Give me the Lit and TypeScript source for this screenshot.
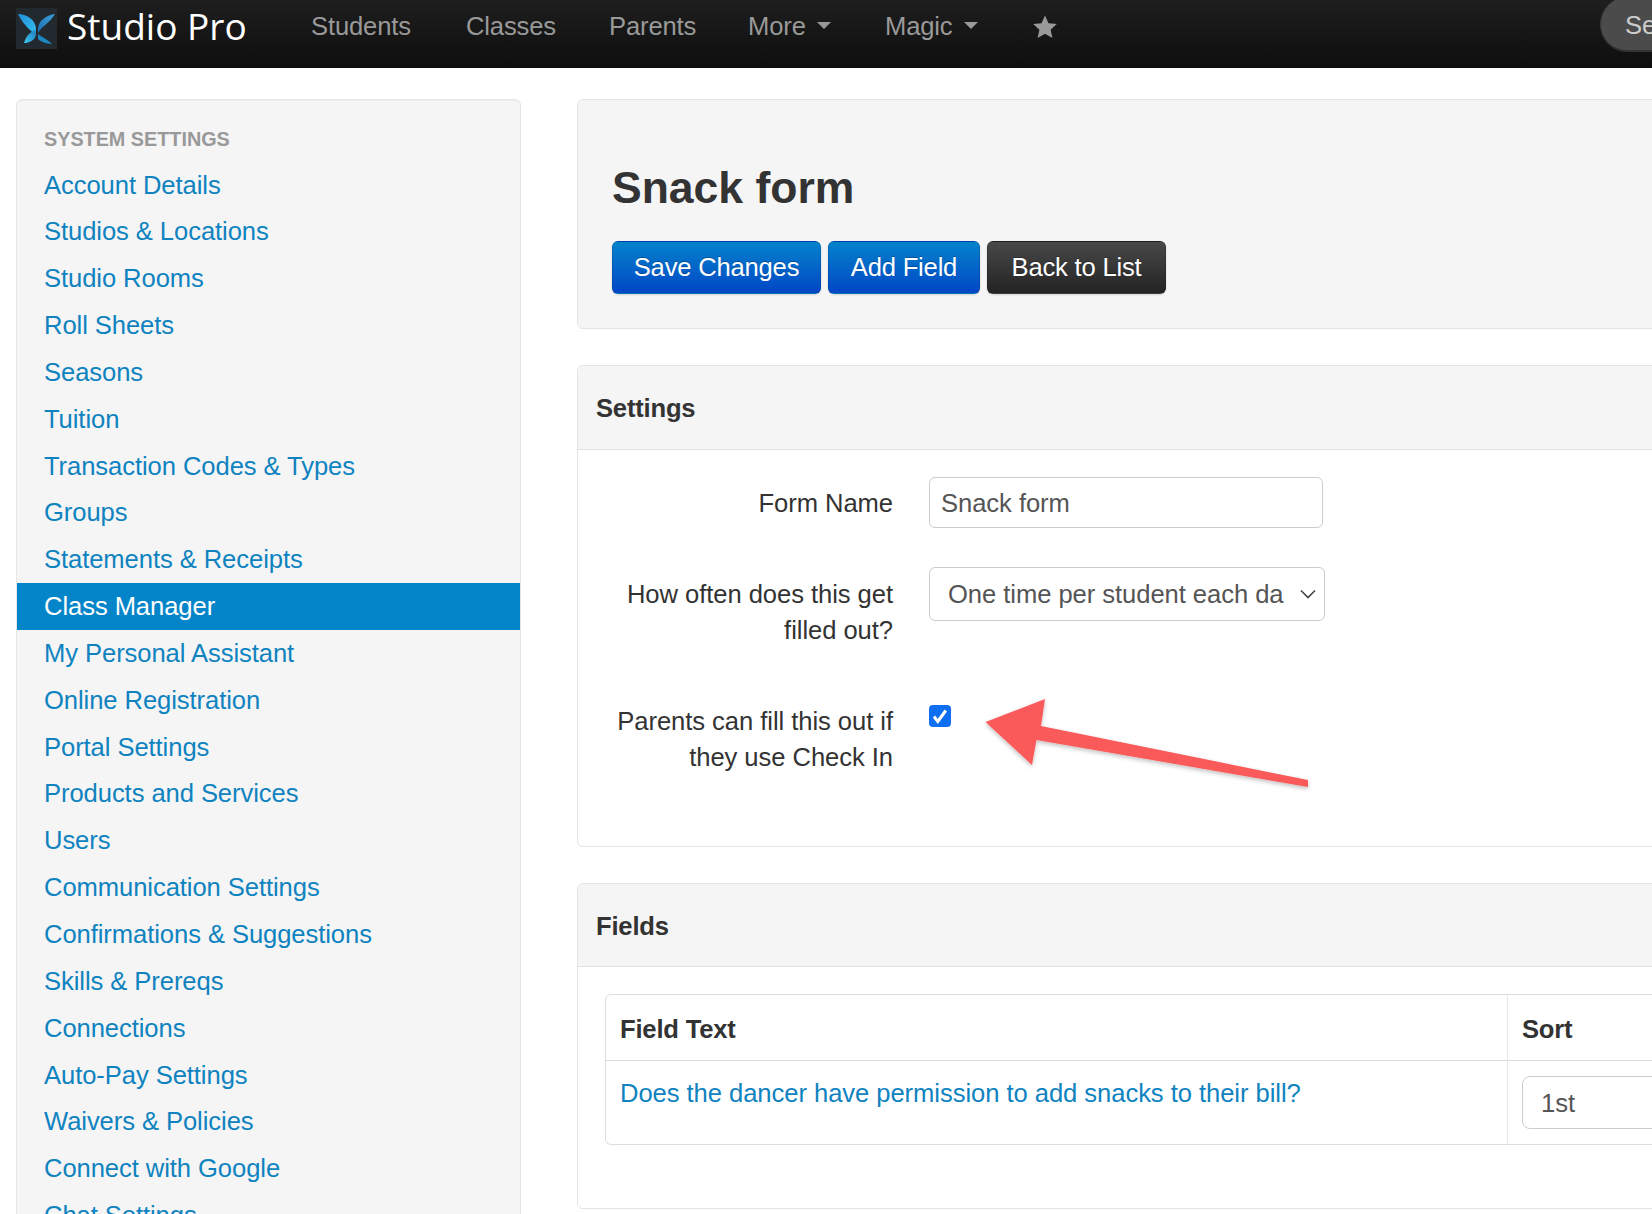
import { LitElement, html, css, svg } from "lit";
import { customElement } from "lit/decorators.js";

const ITEMS = [
  "Account Details", "Studios & Locations", "Studio Rooms", "Roll Sheets", "Seasons", "Tuition",
  "Transaction Codes & Types", "Groups", "Statements & Receipts", "Class Manager", "My Personal Assistant",
  "Online Registration", "Portal Settings", "Products and Services", "Users", "Communication Settings",
  "Confirmations & Suggestions", "Skills & Prereqs", "Connections", "Auto-Pay Settings", "Waivers & Policies",
  "Connect with Google", "Chat Settings",
];

@customElement("app-root")
export class AppRoot extends LitElement {
  static styles = css`
    :host {
      display: block;
      width: 1652px;
      height: 1214px;
      overflow: hidden;
      background: #fff;
      font-family: "Liberation Sans", Arial, sans-serif;
      font-size: 25.6px;
      letter-spacing: -0.06px;
      color: #333;
    }
    a { color: #0f83c0; text-decoration: none; }
    .nav {
      height: 68px;
      background: linear-gradient(#1e1e1e, #0e0e0e);
      display: flex;
      align-items: center;
      position: relative;
      overflow: hidden;
    }
    .logo { width: 41px; height: 41px; margin-left: 16px; margin-top: -12px; flex: none; display: block; }
    .brand { font-family: "Open Sans", sans-serif; font-size: 37px; letter-spacing: 0; color: #fff; margin-left: 10px; margin-top: -17px; width: 244px; flex: none; }
    .nav-item { color: #999; margin-top: -15px; display: flex; align-items: center; flex: none; letter-spacing: -0.15px; }
    .students { width: 155px; }
    .classes { width: 143px; }
    .parents { width: 139px; }
    .more { width: 137px; }
    .magic { width: 148px; }
    .caret { width: 0; height: 0; border-left: 7px solid transparent; border-right: 7px solid transparent; border-top: 7px solid #999; margin-left: 11px; margin-top: -2px; }
    .star { width: 24px; height: 24px; display: block; flex: none; margin-top: -15px; }
    .pill {
      position: absolute; left: 1600px; top: -3px; width: 200px; height: 53px;
      border-radius: 27px; background: #4b4b4b; border-bottom: 2px solid #333; border-left: 1px solid #333;
      color: #ccc; box-sizing: content-box; line-height: 57px; padding-left: 24px;
    }
    .page { display: flex; align-items: flex-start; padding: 31px 0 0 16px; gap: 56px; }
    .side {
      width: 505px; flex: none; box-sizing: border-box; background: #f5f5f5;
      border: 1px solid #e6e6e6; border-radius: 6px; padding: 18px 0 40px;
      box-shadow: inset 0 1px 1px rgba(0,0,0,.03);
    }
    .side h5 { margin: 0; padding-left: 27px; font-size: 19.8px; line-height: 43.5px; font-weight: 700; color: #999; text-transform: uppercase; letter-spacing: 0; }
    .side a { display: block; padding-left: 27px; line-height: 46.85px; height: 46.85px; letter-spacing: -0.08px; }
    .side a.active { background: #0585c9; color: #fff; }
    .main { width: 1200px; flex: none; display: flex; flex-direction: column; gap: 36px; }
    .panel { border: 1px solid #e4e4e4; border-radius: 6px; box-sizing: border-box; background: #fff; }
    .hero { height: 230px; background: #f5f5f5; padding: 0 34px; }
    .hero h1 { margin: 57px 0 22px; font-size: 44.5px; line-height: 62px; font-weight: 700; color: #333; letter-spacing: 0; }
    .btns { display: flex; gap: 7px; }
    .btn {
      height: 53px; box-sizing: border-box; border-radius: 6px; color: #fff; line-height: 51px;
      border: 1px solid rgba(0,0,0,.12); text-align: center; box-shadow: 0 1px 2px rgba(0,0,0,.15);
      text-shadow: 0 -1px 0 rgba(0,0,0,.25); letter-spacing: -0.2px;
    }
    .blue { background: linear-gradient(#0583cb, #0146c6); }
    .dark { background: linear-gradient(#484848, #232323); }
    .b1 { width: 209px; } .b2 { width: 152px; } .b3 { width: 179px; }
    .head { height: 84px; box-sizing: border-box; background: #f5f5f5; border-bottom: 1px solid #e0e0e0; padding-left: 18px; line-height: 85px; font-weight: 700; border-radius: 6px 6px 0 0; letter-spacing: -0.2px; }
    .settings { height: 482px; }
    .form { padding-top: 27px; }
    .row { display: grid; grid-template-columns: 315px 1fr; column-gap: 36px; }
    .lbl { text-align: right; line-height: 36px; }
    .r1 { margin-bottom: 39px; } .r1 .lbl { padding-top: 8px; }
    .r2 { margin-bottom: 55px; } .r2 .lbl { padding-top: 9px; }
    .input, .select {
      box-sizing: border-box; border: 1px solid #ccc; border-radius: 6px; background: #fff;
      font: inherit; color: #555; display: block; padding: 0;
    }
    .input { width: 394px; height: 51px; line-height: 50px; padding-left: 11px; }
    .select { width: 396px; height: 54px; line-height: 53px; padding-left: 18px; position: relative; overflow: hidden; white-space: nowrap; }
    .select svg { position: absolute; right: 7px; top: 20px; width: 18px; height: 12px; }
    .check { width: 22px; height: 22px; border-radius: 4px; background: #0f6ff2; margin-top: 2px; display: block; }
    .fields { height: 326px; }
    .fields .head { height: 83px; line-height: 84px; }
    .tbl { margin: 27px 0 0 27px; width: 1200px; height: 151px; box-sizing: border-box; border: 1px solid #ddd; border-radius: 6px; display: grid; grid-template-columns: 901px 1fr; grid-template-rows: 66px 1fr; }
    .th { font-weight: 700; border-bottom: 1px solid #ddd; line-height: 68px; height: 66px; box-sizing: border-box; padding-left: 14px; letter-spacing: -0.2px; }
    .td { padding-left: 14px; }
    .sep { border-left: 1px solid #e8e8e8; }
    .td a { display: block; line-height: 36px; padding-top: 14px; }
    .sort { margin-top: 15px; width: 200px; height: 53px; line-height: 53px; padding-left: 18px; box-sizing: border-box; border: 1px solid #ccc; border-radius: 8px; color: #555; }
    .arrow { position: absolute; left: 0; top: 0; width: 1652px; height: 1214px; pointer-events: none; }
  `;

  render() {
    return html`
      <div class="nav">
        <svg class="logo" viewBox="0 0 41 41">
          <defs>
            <linearGradient id="lg1" x1="0" y1="0" x2="1" y2="1"><stop offset="0" stop-color="#1f8fd6"/><stop offset="1" stop-color="#38c0ee"/></linearGradient>
            <linearGradient id="lg2" x1="1" y1="0" x2="0" y2="1"><stop offset="0" stop-color="#3a9fd8"/><stop offset="1" stop-color="#1a6fb0"/></linearGradient>
            <linearGradient id="lg3" x1="1" y1="0" x2="0" y2="1"><stop offset="0" stop-color="#1f7fc0"/><stop offset="1" stop-color="#3cc6f0"/></linearGradient>
          </defs>
          <rect width="41" height="41" fill="#222a30"/>
          <path d="M2 6 C10 6 19 11 20 20 L19.5 28 C17 23 9 20 2 6Z" fill="url(#lg1)"/>
          <path d="M39 6 C31 7 23 12 22 20 L22 25 C26 18 34 15 39 6Z" fill="url(#lg2)"/>
          <path d="M8 35 C10 28 14 24 19 22 L19.5 29 C17 33 12 35 8 35Z" fill="url(#lg3)"/>
          <path d="M22 26 C26 29 31 31 36 36 C30 35.5 25 34 22 31Z" fill="#1d87bf"/>
        </svg>
        <div class="brand">Studio Pro</div>
        <div class="nav-item students">Students</div>
        <div class="nav-item classes">Classes</div>
        <div class="nav-item parents">Parents</div>
        <div class="nav-item more">More<span class="caret"></span></div>
        <div class="nav-item magic">Magic<span class="caret"></span></div>
        <svg class="star" viewBox="0 0 24 24"><path d="M12 0.5l3.5 7.7 8.3.9-6.2 5.6 1.8 8.3L12 18.8 4.6 23l1.8-8.3L.2 9.1l8.3-.9z" fill="#999"/></svg>
        <div class="pill">Search</div>
      </div>
      <div class="page">
        <div class="side">
          <h5>System Settings</h5>
          ${ITEMS.map((t) => html`<a class=${t === "Class Manager" ? "active" : ""}>${t}</a>`)}
        </div>
        <div class="main">
          <div class="panel hero">
            <h1>Snack form</h1>
            <div class="btns">
              <div class="btn blue b1">Save Changes</div>
              <div class="btn blue b2">Add Field</div>
              <div class="btn dark b3">Back to List</div>
            </div>
          </div>
          <div class="panel settings">
            <div class="head">Settings</div>
            <div class="form">
              <div class="row r1"><div class="lbl">Form Name</div><div class="input">Snack form</div></div>
              <div class="row r2"><div class="lbl">How often does this get<br />filled out?</div>
                <div class="select">One time per student each da
                  <svg viewBox="0 0 18 12"><path d="M2 2.5l7 7 7-7" fill="none" stroke="#444" stroke-width="1.6"/></svg>
                </div></div>
              <div class="row"><div class="lbl">Parents can fill this out if<br />they use Check In</div>
                <svg class="check" viewBox="0 0 22 22"><path d="M5 11.5l3.8 5 8-11" fill="none" stroke="#fff" stroke-width="3"/></svg>
              </div>
            </div>
          </div>
          <div class="panel fields">
            <div class="head">Fields</div>
            <div class="tbl">
              <div class="th">Field Text</div>
              <div class="th sep">Sort</div>
              <div class="td"><a>Does the dancer have permission to add snacks to their bill?</a></div>
              <div class="td sep"><div class="sort">1st</div></div>
            </div>
          </div>
        </div>
      </div>
      <svg class="arrow" viewBox="0 0 1652 1214">
        <defs><filter id="s" x="-10%" y="-20%" width="120%" height="150%"><feDropShadow dx="0" dy="2" stdDeviation="2" flood-color="#000" flood-opacity=".25"/></filter></defs>
        ${svg`<path d="M985.5 722 L1045 699 L1041 726 L1308 780 L1308 787 L1036.5 740 L1032 765 Z" fill="#fb5a5a" filter="url(#s)"/>`}
      </svg>
    `;
  }
}
